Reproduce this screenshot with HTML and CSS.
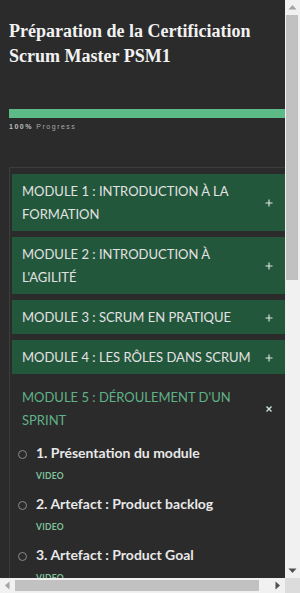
FILE: index.html
```html
<!DOCTYPE html>
<html lang="fr">
<head>
    <meta charset="UTF-8">
    <meta name="viewport" content="width=device-width, initial-scale=1.0">
    <title>Préparation de la Certificiation Scrum Master PSM1</title>
    <link rel="stylesheet" href="styles.css">
</head>
<body>

  <div class="frame">
    <div class="viewport">
      <div class="page">
        <h1 class="course-title">Préparation de la Certificiation Scrum Master PSM1</h1>

        <div class="progress-bar"><div class="progress-fill" style="width: 100%"></div></div>
        <div class="progress-label"><b>100%</b> Progress</div>

        <div class="curriculum">
            <div class="module">
                <span class="module-title">MODULE 1 : INTRODUCTION À LA FORMATION</span>
                <svg class="module-icon" viewBox="0 0 12 12"><path d="M6 2.5v7M2.5 6h7"/></svg>
            </div>
            <div class="module">
                <span class="module-title">MODULE 2 : INTRODUCTION À L'AGILITÉ</span>
                <svg class="module-icon" viewBox="0 0 12 12"><path d="M6 2.5v7M2.5 6h7"/></svg>
            </div>
            <div class="module">
                <span class="module-title">MODULE 3 : SCRUM EN PRATIQUE</span>
                <svg class="module-icon" viewBox="0 0 12 12"><path d="M6 2.5v7M2.5 6h7"/></svg>
            </div>
            <div class="module">
                <span class="module-title">MODULE 4 : LES RÔLES DANS SCRUM</span>
                <svg class="module-icon" viewBox="0 0 12 12"><path d="M6 2.5v7M2.5 6h7"/></svg>
            </div>

            <div class="module-open">
                <div class="module module-active">
                    <span class="module-title">MODULE 5 : DÉROULEMENT D'UN SPRINT</span>
                    <svg class="module-icon close-icon" viewBox="0 0 12 12"><path d="M3.5 3.5l5 5M8.5 3.5l-5 5"/></svg>
                </div>
                <ul class="lessons">
                    <li class="lesson">
                        <div class="lesson-row"><span class="dot"></span><span class="lesson-title">1. Présentation du module</span></div>
                        <div class="lesson-type">VIDEO</div>
                    </li>
                    <li class="lesson">
                        <div class="lesson-row"><span class="dot"></span><span class="lesson-title">2. Artefact : Product backlog</span></div>
                        <div class="lesson-type">VIDEO</div>
                    </li>
                    <li class="lesson">
                        <div class="lesson-row"><span class="dot"></span><span class="lesson-title">3. Artefact : Product Goal</span></div>
                        <div class="lesson-type">VIDEO</div>
                    </li>
                </ul>
            </div>
        </div>
      </div>
    </div>

    <!-- barre verticale -->
    <div class="vscroll">
        <svg class="arrow" viewBox="0 0 15 15"><path class="arrow-off" d="M3.5 9.5h8L7.5 5z"/></svg>
        <div class="vtrack"><div class="vthumb"></div></div>
        <svg class="arrow" viewBox="0 0 15 15"><path d="M3.5 5.5h8L7.5 10z"/></svg>
    </div>

    <!-- barre horizontale -->
    <div class="hscroll">
        <svg class="arrow" viewBox="0 0 15 15"><path class="arrow-off" d="M9.5 3.5v8L5 7.5z"/></svg>
        <div class="htrack"><div class="hthumb"></div></div>
        <svg class="arrow" viewBox="0 0 15 15"><path d="M5.5 3.5v8L10 7.5z"/></svg>
    </div>
    <div class="corner"></div>
  </div>

</body>
</html>
```

FILE: styles.css
```css
html {
    background: #2b2b2b;
}

body {
    margin: 0;
    font-family: Lato, "Noto Sans", sans-serif;
    color: #e6e6e6;
}

.frame {
    width: 300px;
    height: 593px;
    display: grid;
    grid-template-columns: 285px 15px;
    grid-template-rows: 578px 15px;
}

.viewport {
    overflow: hidden;
}

.page {
    width: 300px;
    box-sizing: border-box;
    padding: 19px 9px 60px 9px;
}

.course-title {
    margin: 0 0 40px 0;
    font-family: "Liberation Serif", serif;
    font-size: 18px;
    line-height: 25px;
    font-weight: bold;
    color: #f2f2f2;
}

.progress-bar {
    height: 9px;
    background: #3a3a3a;
}

.progress-fill {
    height: 100%;
    background: #5dbb88;
}

.progress-label {
    margin-top: 4px;
    font-family: "Liberation Sans", Arial, sans-serif;
    font-size: 7px;
    line-height: 10px;
    letter-spacing: 1.5px;
    color: #a8a8a8;
}

.progress-label b {
    color: #bdbdbd;
}

.curriculum {
    margin-top: 35px;
    border-top: 1px solid #3d3d3d;
    border-left: 1px solid #3d3d3d;
    padding: 6px 2px 6px 2px;
    display: flex;
    flex-direction: column;
    gap: 6px;
}

.module {
    display: flex;
    align-items: center;
    gap: 6px;
    background: #23573c;
    padding: 6px 14px 5px 10px;
    font-size: 13px;
    line-height: 23px;
    color: #e2e2e2;
}

.module-title {
    flex: 1;
}

.module-icon {
    width: 12px;
    height: 12px;
    flex: none;
    fill: none;
    stroke: #dfe9e3;
    stroke-width: 1.1;
}

.module-active {
    background: none;
    color: #5fb287;
}

.close-icon {
    stroke: #c9e6d5;
    stroke-width: 1.4;
}

.lessons {
    list-style: none;
    margin: 0;
    padding: 0;
}

.lesson {
    padding: 6px 0 6px 6px;
}

.lesson-row {
    display: flex;
    align-items: flex-start;
    gap: 9px;
}

.dot {
    width: 9px;
    height: 9px;
    box-sizing: border-box;
    margin-top: 7px;
    border: 1.5px solid #8a8a8a;
    border-radius: 50%;
    flex: none;
}

.lesson-title {
    font-size: 14px;
    line-height: 20px;
    font-weight: bold;
    color: #e8e8e8;
}

.lesson-type {
    margin-top: 7px;
    padding-left: 18px;
    font-size: 8.5px;
    line-height: 12px;
    font-weight: bold;
    letter-spacing: 0.3px;
    color: #7fc29b;
}

/* scrollbars */
.vscroll,
.hscroll {
    background: #f1f1f1;
    display: flex;
}

.vscroll {
    flex-direction: column;
}

.arrow {
    width: 15px;
    height: 15px;
    flex: none;
    fill: #505050;
}

.arrow .arrow-off {
    fill: #a3a3a3;
}

.vtrack,
.htrack {
    flex: 1;
}

.vthumb {
    height: 265px;
    margin: 0 2px 0 1px;
    background: #c1c1c1;
}

.hthumb {
    width: 244px;
    height: 11px;
    margin: 2px 0 0 0;
    background: #c1c1c1;
}

.corner {
    background: #dcdcdc;
}
```
